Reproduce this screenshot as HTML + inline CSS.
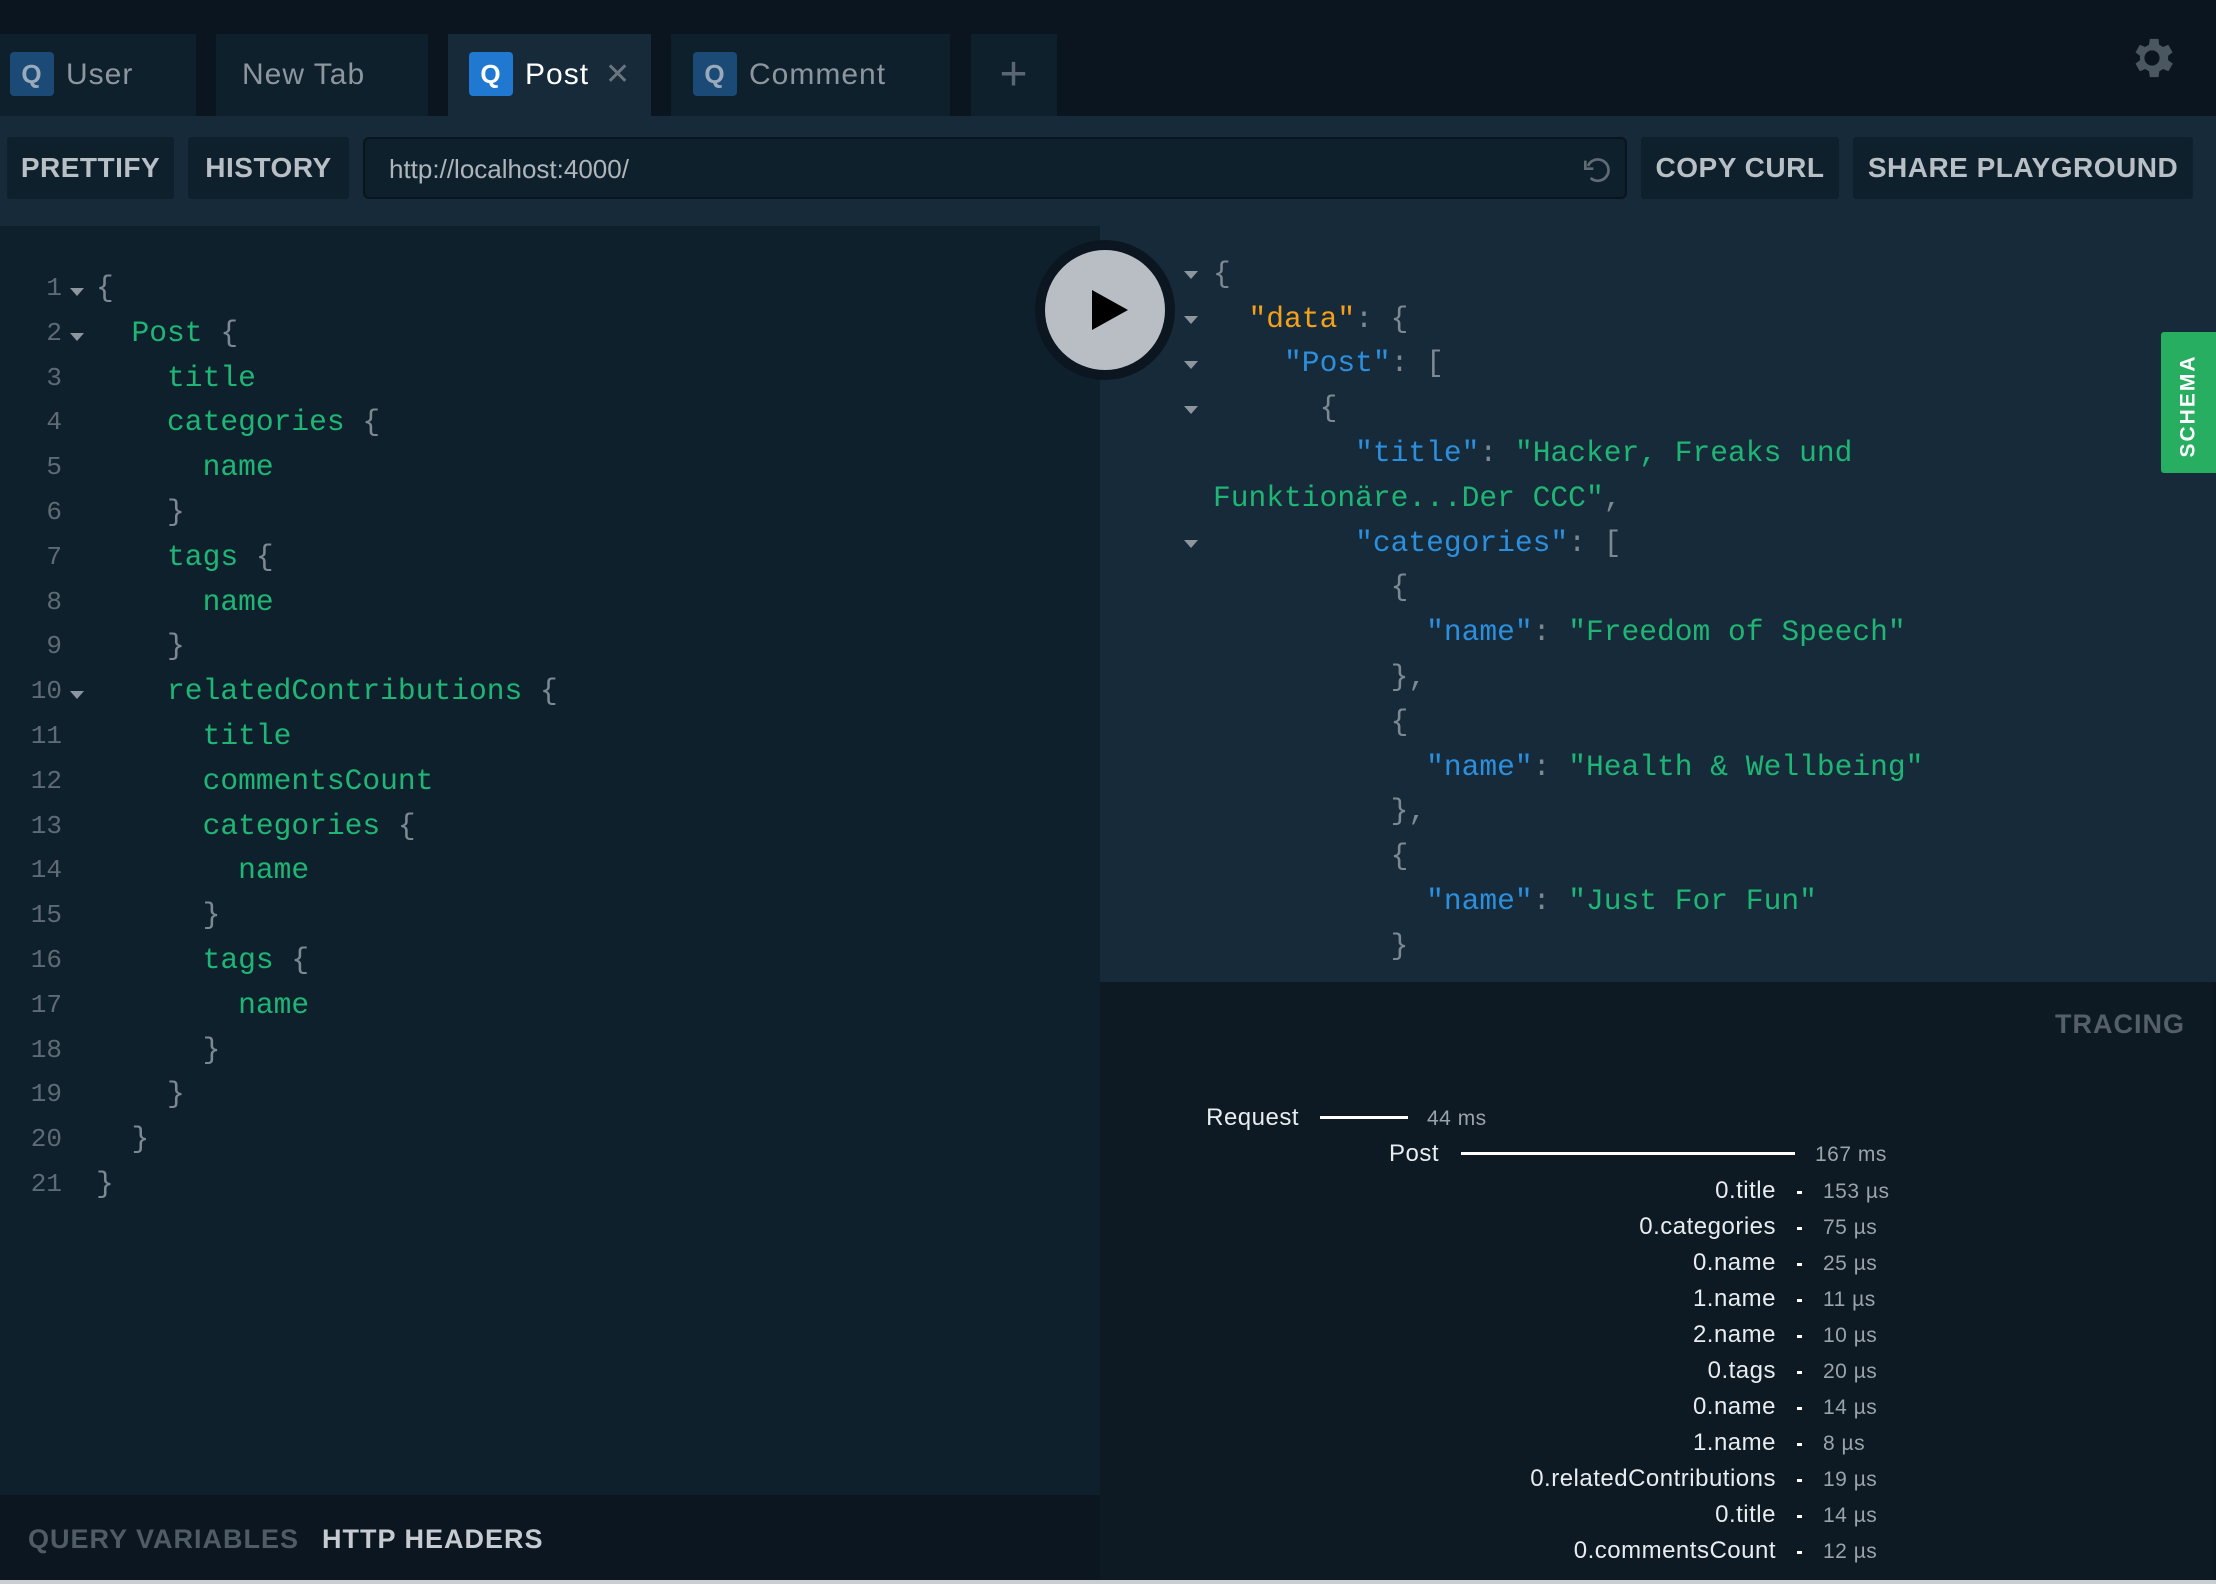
<!DOCTYPE html>
<html><head><meta charset="utf-8"><style>
*{margin:0;padding:0;box-sizing:border-box}
body{width:2216px;height:1584px;background:#0b1620;position:relative;overflow:hidden;font-family:"Liberation Sans",sans-serif}
.a{position:absolute}
.tab{position:absolute;top:34px;height:82px;background:#0f202d;color:#8d969e;font-size:30px;line-height:82px;letter-spacing:1px}
.q{position:absolute;top:18px;width:44px;height:44px;background:#1b4a77;border-radius:4px;color:#9ab;font-weight:bold;font-size:26px;line-height:44px;text-align:center}
.btn{position:absolute;top:137px;height:62px;background:#0f202d;border-radius:3px;color:#b8bfc5;font-size:28px;font-weight:bold;line-height:62px;text-align:center;letter-spacing:0.5px}
.mono{font-family:"Liberation Mono","DejaVu Sans Mono",monospace;font-size:29.6px;white-space:pre}
.ln{position:absolute;height:45px;line-height:45px}
.num{position:absolute;width:62px;text-align:right;color:#5e6a74;font-size:26px}
.g{color:#1fb574}.p{color:#7d8891}.b{color:#2c8fdd}.o{color:#f5a01a}
.arr{position:absolute;width:0;height:0;border-left:7px solid transparent;border-right:7px solid transparent;border-top:8px solid #8d969e}
.tr{position:absolute;font-size:24px;color:#e8ecef;letter-spacing:.5px}
.tv{position:absolute;font-size:21px;color:#9aa3aa;letter-spacing:.5px}
.mono .ln{margin-top:3px}
</style></head><body>
<div class="a" style="left:0;top:0;width:2216px;height:116px;background:#0b151f"></div>
<div class="tab" style="left:0;width:196px"><div class="q" style="left:10px">Q</div><span class="a" style="left:66px">User</span></div>
<div class="tab" style="left:216px;width:212px"><span class="a" style="left:26px">New Tab</span></div>
<div class="tab" style="left:448px;width:203px;background:#172a3a;color:#fff"><div class="q" style="left:21px;background:#2178d0;color:#fff">Q</div><span class="a" style="left:77px">Post</span><span class="a" style="left:157px;color:#6b757e">✕</span></div>
<div class="tab" style="left:671px;width:279px"><div class="q" style="left:22px">Q</div><span class="a" style="left:78px">Comment</span></div>
<div class="tab" style="left:971px;width:86px;text-align:center;font-size:48px;color:#5a6670">+</div>
<svg class="a" style="left:2126px;top:32px" width="52" height="52" viewBox="0 0 24 24"><path fill="#4a5660" d="M19.4 13a7.5 7.5 0 0 0 0-2l2.1-1.6-2-3.5-2.5 1a7 7 0 0 0-1.7-1L15 3.2h-4l-.4 2.7a7 7 0 0 0-1.7 1l-2.5-1-2 3.5L6.5 11a7.5 7.5 0 0 0 0 2l-2.1 1.6 2 3.5 2.5-1a7 7 0 0 0 1.7 1l.4 2.7h4l.4-2.7a7 7 0 0 0 1.7-1l2.5 1 2-3.5zM12 15.5a3.5 3.5 0 1 1 0-7 3.5 3.5 0 0 1 0 7z"/></svg>
<div class="a" style="left:0;top:116px;width:2216px;height:110px;background:#172a3a"></div>
<div class="btn" style="left:7px;width:167px">PRETTIFY</div>
<div class="btn" style="left:188px;width:161px">HISTORY</div>
<div class="a" style="left:363px;top:137px;width:1264px;height:62px;background:#0f202d;border:2px solid #0a141c;border-radius:6px;color:#aeb5bb;font-size:26px;line-height:60px;padding-left:24px">http://localhost:4000/</div>
<svg class="a" style="left:1580px;top:154px" width="32" height="32" viewBox="0 0 24 24"><path d="M6 9a8 8 0 1 1 2 9" fill="none" stroke="#5f6b75" stroke-width="2"/><path d="M4 5v6h6" fill="none" stroke="#5f6b75" stroke-width="2"/></svg>
<div class="btn" style="left:1641px;width:198px">COPY CURL</div>
<div class="btn" style="left:1853px;width:340px">SHARE PLAYGROUND</div>
<div class="a" style="left:0;top:226px;width:1100px;height:1269px;background:#0f202d"></div>
<div class="a" style="left:0;top:1495px;width:1100px;height:89px;background:#0b1620"></div>
<div class="a" style="left:28px;top:1524px;font-size:27px;font-weight:bold;color:#4f5b65;letter-spacing:1px">QUERY VARIABLES</div>
<div class="a" style="left:322px;top:1524px;font-size:27px;font-weight:bold;color:#c5cbd0;letter-spacing:1px">HTTP HEADERS</div>
<div class="mono">
<div class="ln" style="left:0;top:263px"><span class="num">1</span></div><div class="ln" style="left:96px;top:263px"><span class="p">{</span></div>
<div class="ln" style="left:0;top:308px"><span class="num">2</span></div><div class="ln" style="left:96px;top:308px">  <span class="g">Post</span> <span class="p">{</span></div>
<div class="ln" style="left:0;top:353px"><span class="num">3</span></div><div class="ln" style="left:96px;top:353px">    <span class="g">title</span></div>
<div class="ln" style="left:0;top:397px"><span class="num">4</span></div><div class="ln" style="left:96px;top:397px">    <span class="g">categories</span> <span class="p">{</span></div>
<div class="ln" style="left:0;top:442px"><span class="num">5</span></div><div class="ln" style="left:96px;top:442px">      <span class="g">name</span></div>
<div class="ln" style="left:0;top:487px"><span class="num">6</span></div><div class="ln" style="left:96px;top:487px">    <span class="p">}</span></div>
<div class="ln" style="left:0;top:532px"><span class="num">7</span></div><div class="ln" style="left:96px;top:532px">    <span class="g">tags</span> <span class="p">{</span></div>
<div class="ln" style="left:0;top:577px"><span class="num">8</span></div><div class="ln" style="left:96px;top:577px">      <span class="g">name</span></div>
<div class="ln" style="left:0;top:621px"><span class="num">9</span></div><div class="ln" style="left:96px;top:621px">    <span class="p">}</span></div>
<div class="ln" style="left:0;top:666px"><span class="num">10</span></div><div class="ln" style="left:96px;top:666px">    <span class="g">relatedContributions</span> <span class="p">{</span></div>
<div class="ln" style="left:0;top:711px"><span class="num">11</span></div><div class="ln" style="left:96px;top:711px">      <span class="g">title</span></div>
<div class="ln" style="left:0;top:756px"><span class="num">12</span></div><div class="ln" style="left:96px;top:756px">      <span class="g">commentsCount</span></div>
<div class="ln" style="left:0;top:801px"><span class="num">13</span></div><div class="ln" style="left:96px;top:801px">      <span class="g">categories</span> <span class="p">{</span></div>
<div class="ln" style="left:0;top:845px"><span class="num">14</span></div><div class="ln" style="left:96px;top:845px">        <span class="g">name</span></div>
<div class="ln" style="left:0;top:890px"><span class="num">15</span></div><div class="ln" style="left:96px;top:890px">      <span class="p">}</span></div>
<div class="ln" style="left:0;top:935px"><span class="num">16</span></div><div class="ln" style="left:96px;top:935px">      <span class="g">tags</span> <span class="p">{</span></div>
<div class="ln" style="left:0;top:980px"><span class="num">17</span></div><div class="ln" style="left:96px;top:980px">        <span class="g">name</span></div>
<div class="ln" style="left:0;top:1025px"><span class="num">18</span></div><div class="ln" style="left:96px;top:1025px">      <span class="p">}</span></div>
<div class="ln" style="left:0;top:1069px"><span class="num">19</span></div><div class="ln" style="left:96px;top:1069px">    <span class="p">}</span></div>
<div class="ln" style="left:0;top:1114px"><span class="num">20</span></div><div class="ln" style="left:96px;top:1114px">  <span class="p">}</span></div>
<div class="ln" style="left:0;top:1159px"><span class="num">21</span></div><div class="ln" style="left:96px;top:1159px"><span class="p">}</span></div>
</div>
<div class="arr" style="left:70px;top:288px"></div>
<div class="arr" style="left:70px;top:333px"></div>
<div class="arr" style="left:70px;top:691px"></div>
<div class="a" style="left:1100px;top:226px;width:1116px;height:756px;background:#172a3a"></div>
<div class="mono">
<div class="ln" style="left:1213px;top:249px"><span class="p">{</span></div>
<div class="ln" style="left:1213px;top:294px">  <span class="o">"data"</span><span class="p">: {</span></div>
<div class="ln" style="left:1213px;top:338px">    <span class="b">"Post"</span><span class="p">: [</span></div>
<div class="ln" style="left:1213px;top:383px">      <span class="p">{</span></div>
<div class="ln" style="left:1213px;top:428px">        <span class="b">"title"</span><span class="p">: </span><span class="g">"Hacker, Freaks und</span></div>
<div class="ln" style="left:1213px;top:473px"><span class="g">Funktionäre...Der CCC"</span><span class="p">,</span></div>
<div class="ln" style="left:1213px;top:518px">        <span class="b">"categories"</span><span class="p">: [</span></div>
<div class="ln" style="left:1213px;top:562px">          <span class="p">{</span></div>
<div class="ln" style="left:1213px;top:607px">            <span class="b">"name"</span><span class="p">: </span><span class="g">"Freedom of Speech"</span></div>
<div class="ln" style="left:1213px;top:652px">          <span class="p">},</span></div>
<div class="ln" style="left:1213px;top:697px">          <span class="p">{</span></div>
<div class="ln" style="left:1213px;top:742px">            <span class="b">"name"</span><span class="p">: </span><span class="g">"Health &amp; Wellbeing"</span></div>
<div class="ln" style="left:1213px;top:786px">          <span class="p">},</span></div>
<div class="ln" style="left:1213px;top:831px">          <span class="p">{</span></div>
<div class="ln" style="left:1213px;top:876px">            <span class="b">"name"</span><span class="p">: </span><span class="g">"Just For Fun"</span></div>
<div class="ln" style="left:1213px;top:921px">          <span class="p">}</span></div>
</div>
<div class="arr" style="left:1184px;top:271px"></div>
<div class="arr" style="left:1184px;top:316px"></div>
<div class="arr" style="left:1184px;top:361px"></div>
<div class="arr" style="left:1184px;top:406px"></div>
<div class="arr" style="left:1184px;top:540px"></div>
<div class="a" style="left:1035px;top:240px;width:140px;height:140px;border-radius:50%;background:#0b1620"></div>
<div class="a" style="left:1045px;top:250px;width:120px;height:120px;border-radius:50%;background:#b9bec4"></div>
<div class="a" style="left:1092px;top:290px;width:0;height:0;border-top:20px solid transparent;border-bottom:20px solid transparent;border-left:36px solid #000"></div>
<div class="a" style="left:2161px;top:332px;width:55px;height:141px;background:#27ae60;border-radius:3px 0 0 3px"></div>
<div class="a" style="left:2148px;top:389px;width:81px;height:28px;transform:rotate(-90deg);color:#fff;font-weight:bold;font-size:21px;letter-spacing:2px;text-align:center;line-height:28px;margin-top:14px">SCHEMA</div>
<div class="a" style="left:1100px;top:982px;width:1113px;height:602px;background:#0d1923"></div>
<div class="a" style="left:2050px;top:1009px;width:135px;text-align:right;font-size:27px;font-weight:bold;color:#545f69;letter-spacing:1px">TRACING</div>
<div class="tr" style="right:917px;top:1104px">Request</div>
<div class="a" style="left:1320px;top:1116px;width:88px;height:3px;background:#fff"></div>
<div class="tv" style="left:1427px;top:1107px">44 ms</div>
<div class="tr" style="right:777px;top:1140px">Post</div>
<div class="a" style="left:1461px;top:1152px;width:334px;height:3px;background:#fff"></div>
<div class="tv" style="left:1815px;top:1143px">167 ms</div>
<div class="tr" style="right:440px;top:1177px">0.title</div><div class="a" style="left:1797px;top:1191px;width:5px;height:3px;background:#fff"></div><div class="tv" style="left:1823px;top:1180px">153 µs</div>
<div class="tr" style="right:440px;top:1213px">0.categories</div><div class="a" style="left:1797px;top:1227px;width:5px;height:3px;background:#fff"></div><div class="tv" style="left:1823px;top:1216px">75 µs</div>
<div class="tr" style="right:440px;top:1249px">0.name</div><div class="a" style="left:1797px;top:1263px;width:5px;height:3px;background:#fff"></div><div class="tv" style="left:1823px;top:1252px">25 µs</div>
<div class="tr" style="right:440px;top:1285px">1.name</div><div class="a" style="left:1797px;top:1299px;width:5px;height:3px;background:#fff"></div><div class="tv" style="left:1823px;top:1288px">11 µs</div>
<div class="tr" style="right:440px;top:1321px">2.name</div><div class="a" style="left:1797px;top:1335px;width:5px;height:3px;background:#fff"></div><div class="tv" style="left:1823px;top:1324px">10 µs</div>
<div class="tr" style="right:440px;top:1357px">0.tags</div><div class="a" style="left:1797px;top:1371px;width:5px;height:3px;background:#fff"></div><div class="tv" style="left:1823px;top:1360px">20 µs</div>
<div class="tr" style="right:440px;top:1393px">0.name</div><div class="a" style="left:1797px;top:1407px;width:5px;height:3px;background:#fff"></div><div class="tv" style="left:1823px;top:1396px">14 µs</div>
<div class="tr" style="right:440px;top:1429px">1.name</div><div class="a" style="left:1797px;top:1443px;width:5px;height:3px;background:#fff"></div><div class="tv" style="left:1823px;top:1432px">8 µs</div>
<div class="tr" style="right:440px;top:1465px">0.relatedContributions</div><div class="a" style="left:1797px;top:1479px;width:5px;height:3px;background:#fff"></div><div class="tv" style="left:1823px;top:1468px">19 µs</div>
<div class="tr" style="right:440px;top:1501px">0.title</div><div class="a" style="left:1797px;top:1515px;width:5px;height:3px;background:#fff"></div><div class="tv" style="left:1823px;top:1504px">14 µs</div>
<div class="tr" style="right:440px;top:1537px">0.commentsCount</div><div class="a" style="left:1797px;top:1551px;width:5px;height:3px;background:#fff"></div><div class="tv" style="left:1823px;top:1540px">12 µs</div>
<div class="a" style="left:0;top:1580px;width:2216px;height:4px;background:#c9ced2"></div>
</body></html>
